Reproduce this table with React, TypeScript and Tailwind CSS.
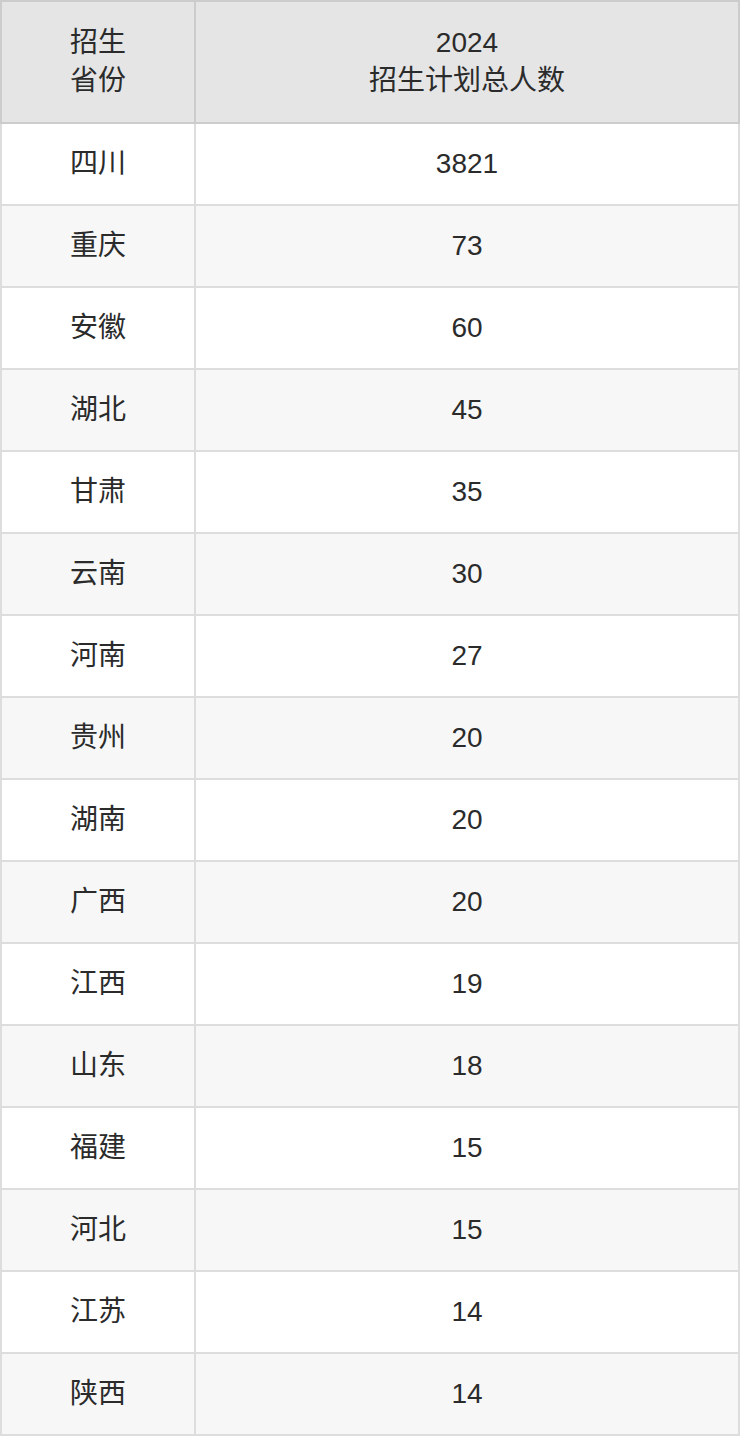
import React from 'react';

const rows: [string, number][] = [
  ['四川', 3821],
  ['重庆', 73],
  ['安徽', 60],
  ['湖北', 45],
  ['甘肃', 35],
  ['云南', 30],
  ['河南', 27],
  ['贵州', 20],
  ['湖南', 20],
  ['广西', 20],
  ['江西', 19],
  ['山东', 18],
  ['福建', 15],
  ['河北', 15],
  ['江苏', 14],
  ['陕西', 14],
];

const App: React.FC = () => {
  return (
    <div
      className="w-[740px] bg-white text-[#2b2b2b] text-[28px] leading-[38px]"
      style={{ fontFamily: '"Liberation Sans", "Noto Sans CJK SC", sans-serif' }}
    >
      {/* Header */}
      <div className="flex h-[124px] bg-[#e5e5e5] border-2 border-[#cccccc]">
        <div className="w-[194px] flex items-center justify-center text-center border-r-2 border-[#cccccc]">
          <div>
            招生
            <br />
            省份
          </div>
        </div>
        <div className="flex-1 flex items-center justify-center text-center">
          <div>
            2024
            <br />
            招生计划总人数
          </div>
        </div>
      </div>

      {/* Body */}
      {rows.map(([province, count], i) => (
        <div
          key={province + i}
          className={`flex h-[82px] border-x-2 border-b-2 border-[#dddddd] ${
            i % 2 === 0 ? 'bg-white' : 'bg-[#f7f7f7]'
          }`}
        >
          <div className="w-[194px] flex items-center justify-center border-r-2 border-[#dddddd]">
            {province}
          </div>
          <div className="flex-1 flex items-center justify-center">{count}</div>
        </div>
      ))}
    </div>
  );
};

export default App;
